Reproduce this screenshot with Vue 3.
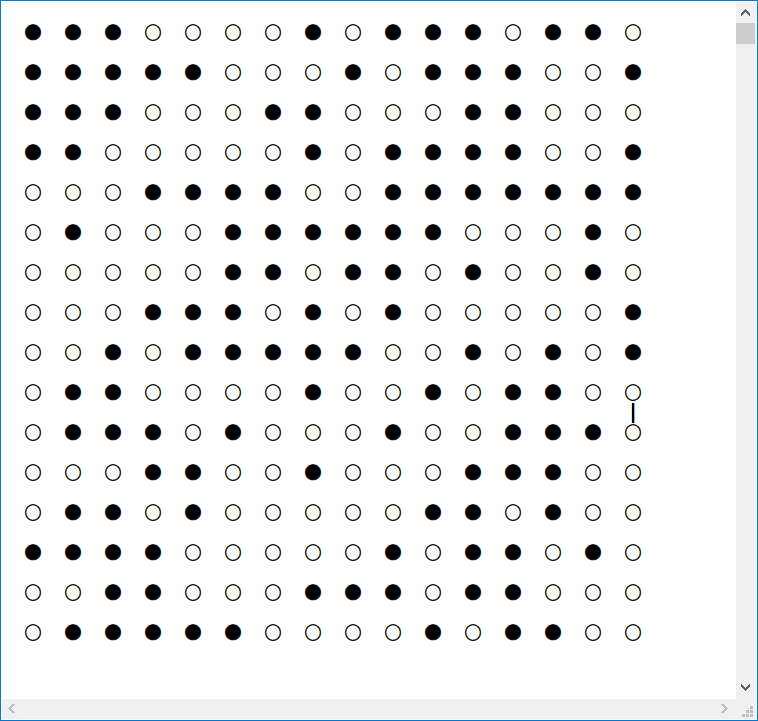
<script setup>
const rows = [
  '1110000101110110',
  '1111100010111001',
  '1110001100011000',
  '1100000101111001',
  '0001111001111111',
  '0100011111100010',
  '0000011011010010',
  '0001110101000001',
  '0010111110010101',
  '0110000100101100',
  '0111010001001110',
  '0001100100011100',
  '0110100000110100',
  '1111000001011010',
  '0011000111011000',
  '0111110000101100',
]
// Row and column where a bar joins a cell to the one below it
const joinRow = 9
const joinCol = 15

// Stepped chevrons: nine 3px segments, each offset by one pixel
const steps = Array.from({ length: 9 }, (_, i) => i)
const up = steps.map((i) => `M${i} ${Math.abs(i - 4)}h1v3h-1z`).join('')
const down = steps.map((i) => `M${i} ${4 - Math.abs(i - 4)}h1v3h-1z`).join('')
const left = steps.map((i) => `M${Math.abs(i - 4)} ${i}h3v1h-3z`).join('')
const right = steps.map((i) => `M${4 - Math.abs(i - 4)} ${i}h3v1h-3z`).join('')
</script>

<template>
  <div class="window">
    <main class="view">
      <div class="board">
        <template v-for="(row, r) in rows" :key="r">
          <span v-for="(c, i) in row.split('')" :key="r + '-' + i" class="cell" :class="{ open: c === '0' }">
            {{ c === '1' ? '●' : '○' }}
            <i v-if="r === joinRow && i === joinCol" class="bar"></i>
          </span>
        </template>
      </div>
    </main>
    <div class="vbar">
      <svg class="up" width="9" height="7" viewBox="0 0 9 7"><path :d="up" /></svg>
      <div class="thumb"></div>
      <svg class="down" width="9" height="7" viewBox="0 0 9 7"><path :d="down" /></svg>
    </div>
    <div class="hbar">
      <svg width="7" height="9" viewBox="0 0 7 9"><path :d="left" /></svg>
      <svg width="7" height="9" viewBox="0 0 7 9"><path :d="right" /></svg>
    </div>
    <div class="grip">
      <svg width="11" height="11" viewBox="0 0 11 11"><path d="M8 0h3v3h-3zM4 4h3v3h-3zM8 4h3v3h-3zM0 8h3v3h-3zM4 8h3v3h-3zM8 8h3v3h-3z" /></svg>
    </div>
  </div>
</template>

<style>
body { margin: 0; background: #fff; overflow: hidden; }
</style>

<style scoped>
.window {
  box-sizing: border-box;
  width: 758px;
  height: 721px;
  border: 1px solid #0078d7;
  padding: 1px;
  display: grid;
  grid-template-columns: 734px 20px;
  grid-template-rows: 697px 20px;
  background: #fff;
}
.view { padding: 10px 0 0 11px; }
.board {
  display: grid;
  grid-template-columns: repeat(16, 40px);
  grid-auto-rows: 40px;
}
.cell {
  position: relative;
  text-align: center;
  font: 17px/40px "Noto Sans CJK JP", sans-serif;
  color: #000;
  -webkit-text-stroke: 0.7px #000;
}
.open { -webkit-text-stroke: 0.5px #000; }
.bar {
  position: absolute;
  left: 19px;
  top: 31px;
  width: 2px;
  height: 20px;
  background: #000;
  box-shadow: -1px 0 #ffdbb0, 1px 0 #6ab8f5;
}
.vbar {
  background: #f0f0f0;
  display: flex;
  flex-direction: column;
  padding: 7px 1px 8px 0;
}
.vbar svg { margin-left: 5px; fill: #606060; }
.thumb { width: 19px; height: 21px; margin-top: 7px; background: #cdcdcd; }
.vbar .down { margin-top: auto; }
.hbar {
  background: #f0f0f0;
  display: flex;
  justify-content: space-between;
  padding: 5px 8px 0 6px;
}
.hbar svg { fill: #bfbfbf; }
.grip { background: #f0f0f0; padding: 7px 0 0 6px; }
.grip svg { display: block; fill: #bfbfbf; }
</style>
